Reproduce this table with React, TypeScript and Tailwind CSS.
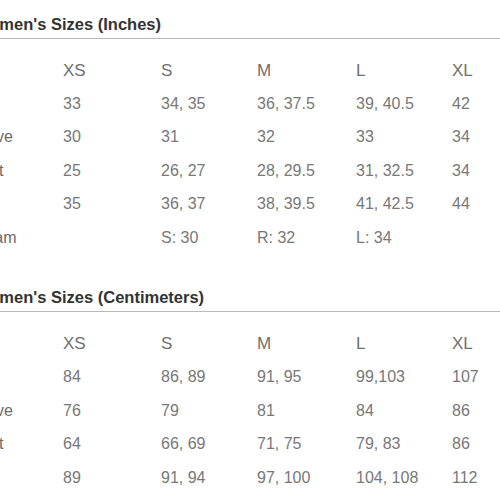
const sizes = ["XS", "S", "M", "L", "XL"];

const inches: [string, string[]][] = [
  ["Bust", ["33", "34, 35", "36, 37.5", "39, 40.5", "42"]],
  ["Sleeve", ["30", "31", "32", "33", "34"]],
  ["Waist", ["25", "26, 27", "28, 29.5", "31, 32.5", "34"]],
  ["Hips", ["35", "36, 37", "38, 39.5", "41, 42.5", "44"]],
  ["Inseam", ["", "S: 30", "R: 32", "L: 34", ""]],
];

const centimeters: [string, string[]][] = [
  ["Bust", ["84", "86, 89", "91, 95", "99,103", "107"]],
  ["Sleeve", ["76", "79", "81", "84", "86"]],
  ["Waist", ["64", "66, 69", "71, 75", "79, 83", "86"]],
  ["Hips", ["89", "91, 94", "97, 100", "104, 108", "112"]],
];

export default function App() {
  return (
    <div className="w-[500px] h-[500px] overflow-hidden bg-white font-['Liberation_Sans',Arial,sans-serif]">
      <div className="-ml-[36px] w-[560px]">
        <SizeTable title="Women's Sizes (Inches)" rows={inches} top="pt-[14px]" />
        <SizeTable title="Women's Sizes (Centimeters)" rows={centimeters} top="pt-[33px]" />
      </div>
    </div>
  );
}

function SizeTable({ title, rows, top }: { title: string; rows: [string, string[]][]; top: string }) {
  return (
    <section className={top}>
      <h2 className="pl-[10px] h-[20px] leading-[20px] text-[16.5px] font-bold text-[#333333]">{title}</h2>
      <div className="mt-[4px] h-px bg-[#b9b9b9]" />

      {/* Size header */}
      <div className="mt-[15px] grid grid-cols-[99px_98px_96px_99px_96px_1fr] h-[33.4px] items-center text-[17px] text-[#707070]">
        <span />
        {sizes.map((s) => (
          <span key={s}>{s}</span>
        ))}
      </div>

      {rows.map(([label, values]) => (
        <div
          key={label}
          className="grid grid-cols-[99px_98px_96px_99px_96px_1fr] h-[33.4px] items-center text-[16px] text-[#787878]"
        >
          <span className="text-[#6a6a6a]">{label}</span>
          {values.map((v, i) => (
            <span key={i}>{v}</span>
          ))}
        </div>
      ))}
    </section>
  );
}
